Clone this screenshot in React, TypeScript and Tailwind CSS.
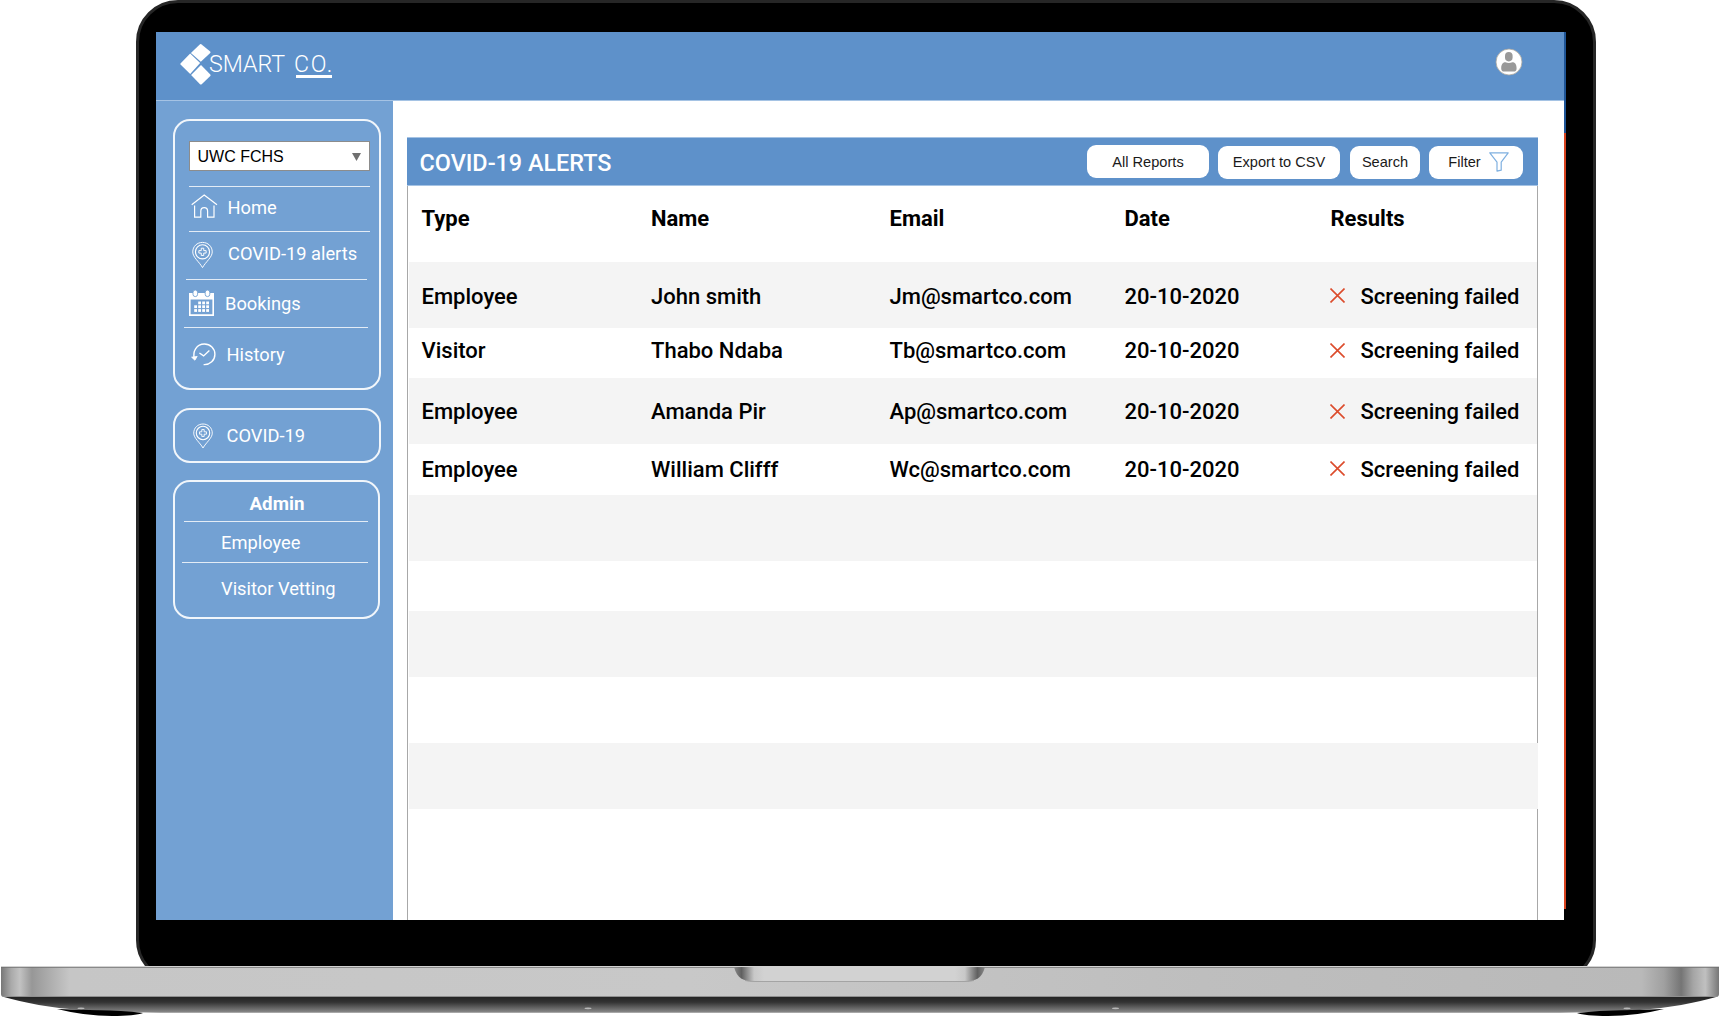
import React from "react";

type Row = {
  height: string;
  shade?: boolean;
  edge?: boolean;
  data?: [string, string, string, string];
};

const COLUMNS = "grid grid-cols-[229.5px_238.5px_235px_206px_1fr]";

const rows: Row[] = [
  { height: "h-[66px] pt-[2px]", shade: true, edge: true, data: ["Employee", "John smith", "Jm@smartco.com", "20-10-2020"] },
  { height: "h-[50px] pb-[5px]", edge: true, data: ["Visitor", "Thabo Ndaba", "Tb@smartco.com", "20-10-2020"] },
  { height: "h-[66px] pt-px", shade: true, edge: true, data: ["Employee", "Amanda Pir", "Ap@smartco.com", "20-10-2020"] },
  { height: "h-[51px] pb-px", edge: true, data: ["Employee", "William Clifff", "Wc@smartco.com", "20-10-2020"] },
  { height: "h-[66px]", shade: true, edge: true },
  { height: "h-[50px]", edge: true },
  { height: "h-[66px]", shade: true, edge: true },
  { height: "h-[66px]", edge: true },
  { height: "h-[66px]", shade: true },
  { height: "h-[111px]", edge: true },
];

function Logo() {
  return (
    <svg width="31" height="41" viewBox="0 0 31 41" fill="#fff">
      <path d="M20 0.3 Q20.8 -0.2 21.6 0.4 L30.2 7.4 Q30.9 8.2 30.2 8.9 L20.8 17.8 L10.9 8.9 Z" />
      <path d="M0.5 20.4 Q0 19.9 0.5 19.4 L10.2 9.6 L20.1 19 L10.2 30 Z" />
      <path d="M21 20.9 L30.3 30.6 Q30.9 31.3 30.3 32 L21.7 40.2 Q20.8 40.8 20 40.2 L11.1 31 Z" />
    </svg>
  );
}

function HomeIcon() {
  return (
    <svg width="27" height="25" viewBox="0 0 27 25" fill="none" stroke="#fff" strokeWidth="1.2">
      <path d="M0.7 10.8 L13.2 1.1 L26 10.8" />
      <path d="M3.6 11.6 V23.2 H9.8 V17.2 C9.8 12.4 16.6 12.4 16.6 17.2 V23.2 H23 V11.6" />
    </svg>
  );
}

function PinIcon({ className }: { className: string }) {
  return (
    <svg className={className} viewBox="0 0 22 28" fill="none" stroke="#fff" strokeWidth="1">
      <path d="M11 27.2 C7.5 21 0.8 16.4 0.8 10.8 C0.8 5 5.3 0.8 11 0.8 C16.7 0.8 21.2 5 21.2 10.8 C21.2 16.4 14.5 21 11 27.2 Z" />
      <circle cx="11" cy="10.7" r="7.4" strokeWidth="1.2" />
      <path d="M9.7 6.9 H12.3 V9.4 H14.8 V12 H12.3 V14.5 H9.7 V12 H7.2 V9.4 H9.7 Z" />
    </svg>
  );
}

function CalendarIcon() {
  const cells = [
    [9.2, 11.5], [13.2, 11.5], [17.2, 11.5],
    [5.2, 15.3], [9.2, 15.3], [13.2, 15.3], [17.2, 15.3],
    [5.2, 19.1], [9.2, 19.1], [13.2, 19.1], [17.2, 19.1],
  ];
  return (
    <svg width="25" height="26" viewBox="0 0 25 26">
      <path fill="#fff" fillRule="evenodd" d="M0 3 H25 V26 H0 Z M1.6 9.4 V24.2 H23.4 V9.4 Z" />
      <rect x="4" y="0" width="4.6" height="6.6" rx="2.3" fill="#fff" stroke="#73a1d3" strokeWidth="0.9" />
      <rect x="16.2" y="0" width="4.6" height="6.6" rx="2.3" fill="#fff" stroke="#73a1d3" strokeWidth="0.9" />
      {cells.map(([x, y]) => (
        <rect key={`${x}-${y}`} x={x} y={y} width="2.8" height="2.8" fill="#fff" />
      ))}
    </svg>
  );
}

function HistoryIcon() {
  return (
    <svg width="25" height="23" viewBox="0 0 25 23" fill="none" stroke="#fff" strokeWidth="1.4">
      <path d="M3.4 15.6 C1.2 8.2 5.8 1 13.4 1 C19.4 1 23.9 5.6 23.9 11.2 C23.9 17.2 19.2 22 12.6 21.6" />
      <path d="M0.6 14.2 L6.2 13.4 L3.9 17.2 Z" fill="#fff" strokeWidth="0.8" />
      <path d="M8.4 10 L12.6 12.9 L18.4 7.6" />
    </svg>
  );
}

function FunnelIcon() {
  return (
    <svg width="20" height="20" viewBox="0 0 20 20" fill="none" stroke="#7fb0e0" strokeWidth="1.2" strokeLinejoin="round">
      <path d="M0.8 0.8 H19.2 L12.2 10.2 V18.2 L8 19.2 V10.2 Z" />
    </svg>
  );
}

function Avatar() {
  return (
    <svg width="28" height="28" viewBox="0 0 28 28">
      <circle cx="14" cy="14" r="13" fill="#fff" stroke="#a8a49c" strokeWidth="0.8" />
      <rect x="10" y="4" width="7.6" height="9.4" rx="3.8" fill="#999" />
      <path d="M6.2 20.5 C6.2 15.6 8.4 14.2 10.4 14.2 Q13.8 15.6 17.4 14.2 C19.6 14.2 21.6 15.6 21.6 20.5 Q21.6 23.6 18.6 23.6 H9.2 Q6.2 23.6 6.2 20.5 Z" fill="#999" />
    </svg>
  );
}

function Cross() {
  return (
    <svg width="15" height="15" viewBox="0 0 15 15" fill="none" stroke="#dc4c2c" strokeWidth="1.6">
      <path d="M0.5 0.5 L14.5 14.5 M14.5 0.5 L0.5 14.5" />
    </svg>
  );
}

function Header() {
  return (
    <header className="flex h-[69px] w-[1408px] items-start border-b border-[#a5c3e4] bg-[#5e91ca] pl-[24px] pr-[41px]">
      <div className="mt-[12px] flex items-start text-white">
        <Logo />
        <div className="-ml-[2px] mt-[6px] flex text-[23.2px] font-[350] leading-7">
          <span className="w-[85px]">SMART</span>
          <span className="flex flex-col">
            <span className="h-[25px] tracking-[1.6px]">CO.</span>
            <span className="ml-[2px] h-[3px] w-[36px] bg-white" />
          </span>
        </div>
      </div>
      <div className="ml-auto mt-[16px]">
        <Avatar />
      </div>
    </header>
  );
}

function Sidebar() {
  return (
    <aside className="h-full w-[237px] bg-[#73a1d3] pt-[18px] text-[18.3px] font-[370] text-white">
      <nav className="ml-[17px] h-[271px] w-[208px] rounded-[17px] border-2 border-white/90 pl-[9px] pt-[20px]">
        <div className="ml-[5px] flex h-[30px] w-[181px] items-center justify-between border border-[#8c8c8c] bg-white pl-[7.5px] pr-[8px] pt-px font-['Liberation_Sans',sans-serif] text-base font-normal text-black">
          <span>UWC FCHS</span>
          <svg width="9" height="8" viewBox="0 0 9 8">
            <path d="M0 0 H9 L4.5 8 Z" fill="#707070" />
          </svg>
        </div>
        <div className="ml-[5px] mt-[15px] flex h-[45px] w-[181px] items-center border-t border-white/80 pb-[5px] pl-[2px]">
          <HomeIcon />
          <span className="ml-[9.5px] pt-[3px]">Home</span>
        </div>
        <div className="ml-[5px] flex h-[48px] w-[181px] items-center border-t border-white/80 pb-[2px] pl-[3px]">
          <PinIcon className="h-[28px] w-[21px]" />
          <span className="ml-[15px] pb-[2px]">COVID-19 alerts</span>
        </div>
        <div className="ml-[2px] flex h-[48px] w-[181px] items-center border-t border-white/80 pb-[2px] pl-[3px]">
          <CalendarIcon />
          <span className="ml-[11px] pt-[2px]">Bookings</span>
        </div>
        <div className="flex h-[56px] w-[184px] items-center border-t border-white/80 pb-[2px] pl-[7px]">
          <HistoryIcon />
          <span className="ml-[10.5px]">History</span>
        </div>
      </nav>
      <div className="ml-[17px] mt-[18px] flex h-[55px] w-[208px] items-center rounded-[17px] border-2 border-white/90 pl-[18px]">
        <PinIcon className="h-[26px] w-[20px]" />
        <span className="ml-[13.5px]">COVID-19</span>
      </div>
      <div className="ml-[17px] mt-[17px] h-[139px] w-[207px] rounded-[17px] border-2 border-white/90 pl-[8px]">
        <div className="flex h-[39px] items-center pl-[66.5px] pt-[5px] text-[18.8px] font-bold">Admin</div>
        <div className="ml-px flex h-[41px] w-[184px] items-center border-t border-white/80 pl-[37px] pt-px">Employee</div>
        <div className="-ml-px flex h-[52px] w-[186px] items-center border-t border-white/80 pl-[39px] pt-px">Visitor Vetting</div>
      </div>
    </aside>
  );
}

const BUTTON = "flex h-[33px] items-center justify-center rounded-[9px] bg-white";

function AlertsPanel() {
  return (
    <section className="ml-[14px] mt-[36px] flex w-[1131px] flex-col">
      <div className="flex h-[49px] items-start border-y border-[#a5c3e4] bg-[#5e91ca]">
        <h1 className="ml-[12.5px] mt-[9px] text-[23.4px] font-medium leading-8 text-white">COVID-19 ALERTS</h1>
        <div className="ml-auto mr-[15px] mt-[8px] flex items-start font-['Liberation_Sans',sans-serif] text-[14.6px] text-[#1a1a1a]">
          <button className={`${BUTTON} -mt-px w-[122px] pt-[2px]`}>All Reports</button>
          <button className={`${BUTTON} ml-[9px] w-[122px] pt-px`}>Export to CSV</button>
          <button className={`${BUTTON} ml-[10px] w-[70px]`}>Search</button>
          <button className={`${BUTTON} ml-[9px] w-[94px] gap-[8px] pl-[5px]`}>
            Filter
            <span className="-mt-px">
              <FunnelIcon />
            </span>
          </button>
        </div>
      </div>
      <div className="text-[22px] font-medium text-black">
        <div className={`${COLUMNS} h-[76px] items-center border-x border-[#a8a8a8] pb-[12px] pl-[13.5px] font-bold`}>
          <span>Type</span>
          <span>Name</span>
          <span>Email</span>
          <span>Date</span>
          <span>Results</span>
        </div>
        {rows.map((row, i) => (
          <div key={i} className={row.edge ? "border-x border-[#a8a8a8] pl-px" : "border-x border-l-[#a8a8a8] border-r-[#f4f4f4] pl-px"}>
            <div className={`${COLUMNS} ${row.height} items-center pl-[12.5px] ${row.shade ? "bg-[#f4f4f4]" : "bg-white"}`}>
              {row.data && (
                <>
                  {row.data.map((cell, j) => (
                    <span key={j}>{cell}</span>
                  ))}
                  <span className="-ml-[0.5px] flex items-center gap-[15.5px]">
                    <span className="-mt-px">
                      <Cross />
                    </span>
                    Screening failed
                  </span>
                </>
              )}
            </div>
          </div>
        ))}
      </div>
    </section>
  );
}

function LaptopBase() {
  return (
    <svg className="block" width="1720" height="50" viewBox="0 966 1720 50">
      <defs>
        <linearGradient id="deck" x1="0" x2="1" y1="0" y2="0">
          <stop offset="0" stopColor="#777" />
          <stop offset="0.006" stopColor="#aaa" />
          <stop offset="0.011" stopColor="#c2c2c2" />
          <stop offset="0.018" stopColor="#979797" />
          <stop offset="0.026" stopColor="#a8a8a8" />
          <stop offset="0.04" stopColor="#c6c6c6" />
          <stop offset="0.4" stopColor="#c8c8c8" />
          <stop offset="0.7" stopColor="#bebebe" />
          <stop offset="0.955" stopColor="#b9b9b9" />
          <stop offset="0.968" stopColor="#a0a0a0" />
          <stop offset="0.978" stopColor="#757575" />
          <stop offset="0.985" stopColor="#a5a5a5" />
          <stop offset="0.992" stopColor="#c0c0c0" />
          <stop offset="1" stopColor="#777" />
        </linearGradient>
        <linearGradient id="under" x1="0" x2="0" y1="0" y2="1">
          <stop offset="0" stopColor="#222" />
          <stop offset="0.35" stopColor="#333" />
          <stop offset="1" stopColor="#8c8c8c" />
        </linearGradient>
        <linearGradient id="notch" x1="0" x2="1" y1="0" y2="0">
          <stop offset="0" stopColor="#888" />
          <stop offset="0.03" stopColor="#606060" />
          <stop offset="0.08" stopColor="#c8c8c8" />
          <stop offset="0.12" stopColor="#d2d2d2" />
          <stop offset="0.88" stopColor="#d2d2d2" />
          <stop offset="0.92" stopColor="#c8c8c8" />
          <stop offset="0.97" stopColor="#606060" />
          <stop offset="1" stopColor="#888" />
        </linearGradient>
      </defs>
      <path d="M2 996.5 H1718 C1696 1003 1668 1008 1640 1010 Q1600 1012.7 1560 1012.7 H160 Q120 1012.7 80 1010 C52 1008 24 1003 2 996.5 Z" fill="url(#under)" />
      <path d="M57 1009 Q85 1016 112 1016 Q135 1016 143 1013 Q120 1010.5 100 1010.3 Q78 1010 57 1009 Z" fill="#000" />
      <path d="M1664 1009 Q1636 1016 1608 1016 Q1585 1016 1577 1013 Q1600 1010.5 1621 1010.3 Q1643 1010 1664 1009 Z" fill="#000" />
      <path d="M1 967 H1719 V994 Q1719 997 1716 997 H4 Q1 997 1 994 Z" fill="url(#deck)" />
      <path d="M1 967.2 H1719" stroke="#6e6e6e" strokeWidth="1" />
      <path d="M3 996.5 H1717" stroke="#8f8f8f" strokeWidth="1" />
      <path d="M734 967 H985 C982 978 976 981.5 964 981.5 H755 C743 981.5 737 978 734 967 Z" fill="url(#notch)" />
      <path d="M745 980.5 Q749 981.5 755 981.5 H964 Q970 981.5 974 980.5" fill="none" stroke="#999" strokeWidth="0.8" />
      {[81, 588, 1115.5, 1627].map((x) => (
        <ellipse key={x} cx={x} cy="1008.3" rx="3.5" ry="0.9" fill="#b8b8b8" />
      ))}
    </svg>
  );
}

export default function App() {
  return (
    <div className="h-[1016px] w-[1720px] overflow-hidden bg-white font-['Roboto',sans-serif]">
      <div className="h-[966px] overflow-hidden">
        <div className="ml-[136px] h-[982px] w-[1460px] rounded-[42px] border-[3.5px] border-[#262626] bg-black pl-[17px] pt-[29px]">
          <div className="flex h-[888px] w-[1410px]">
            <div className="flex w-[1408px] flex-col overflow-hidden bg-white">
              <Header />
              <div className="flex min-h-0 flex-1">
                <Sidebar />
                <AlertsPanel />
              </div>
            </div>
            <div className="flex w-[1.5px] flex-col">
              <div className="h-[101px] bg-[#1f5596]" />
              <div className="h-[776px] bg-[#d8431f]" />
            </div>
          </div>
        </div>
      </div>
      <LaptopBase />
    </div>
  );
}
